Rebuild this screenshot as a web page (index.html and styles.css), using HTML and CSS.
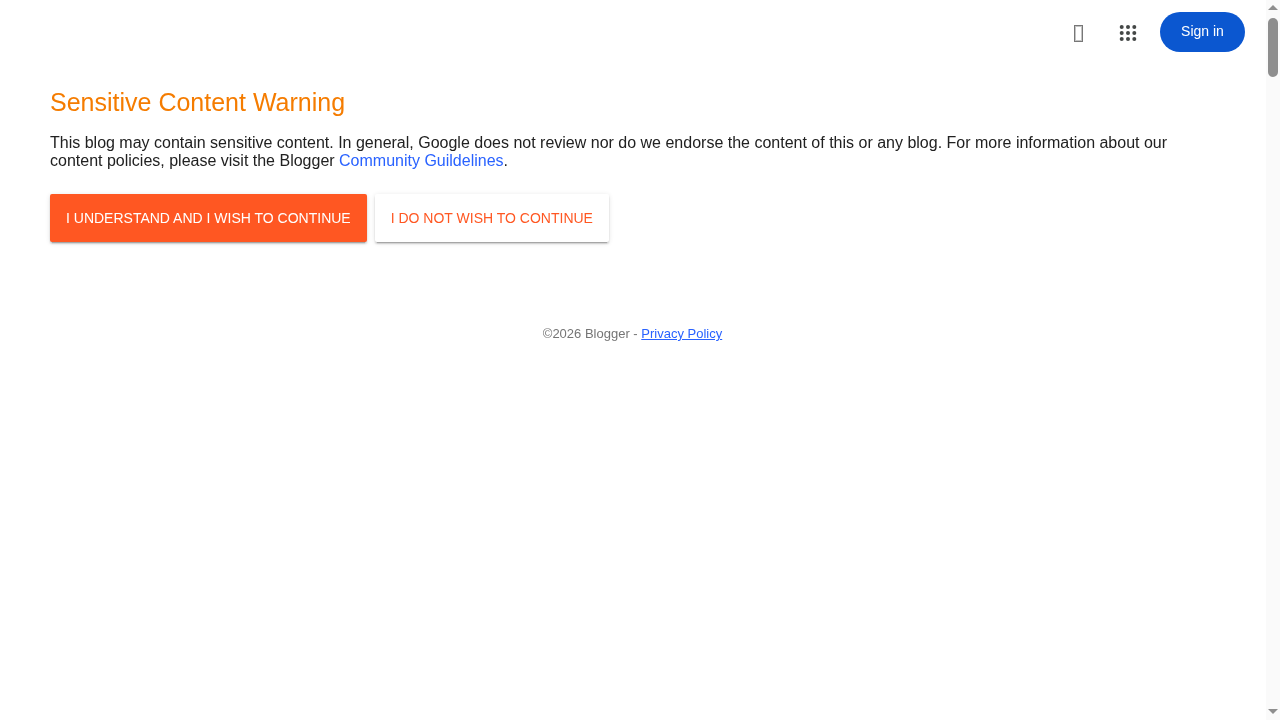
FILE: index.html
```html
<!DOCTYPE html>
<html lang="en">
<head>
  <meta charset="UTF-8">
  <meta name="viewport" content="width=device-width, initial-scale=1.0">
  <title>Blogger: Sensitive Content Warning</title>
  <link rel="stylesheet" href="styles.css">
</head>
<body>
  <div class="page">
    <header class="top-bar">
      <span class="icon-missing"></span>
      <svg class="icon-apps" width="24" height="24" viewBox="0 0 24 24" fill="currentColor">
        <circle cx="5.7" cy="6" r="2"/><circle cx="12" cy="6" r="2"/><circle cx="18.3" cy="6" r="2"/>
        <circle cx="5.7" cy="12" r="2"/><circle cx="12" cy="12" r="2"/><circle cx="18.3" cy="12" r="2"/>
        <circle cx="5.7" cy="18" r="2"/><circle cx="12" cy="18" r="2"/><circle cx="18.3" cy="18" r="2"/>
      </svg>
      <a class="btn-signin" href="#">Sign in</a>
    </header>

    <main class="warning">
      <h1>Sensitive Content Warning</h1>
      <p>This blog may contain sensitive content. In general, Google does not review nor do we endorse the content of this or any blog. For more information about our content policies, please visit the Blogger <a href="#">Community Guildelines</a>.</p>
      <div class="actions">
        <a class="btn btn-primary" href="#">I UNDERSTAND AND I WISH TO CONTINUE</a>
        <a class="btn btn-plain" href="#">I DO NOT WISH TO CONTINUE</a>
      </div>
    </main>

    <footer class="page-footer">&copy;2026 Blogger - <a href="#">Privacy Policy</a></footer>
  </div>

  <div class="scrollbar">
    <span class="arrow-up"></span>
    <span class="thumb"></span>
    <span class="arrow-down"></span>
  </div>
</body>
</html>
```

FILE: styles.css
```css
body {
  font-family: "Liberation Sans", Arial, sans-serif;
  display: flex;
  height: 100vh;
  margin: 0;
  overflow: hidden;
  background-color: #fff;
  color: #212121;
}

a {
  color: #2962ff;
  text-decoration: none;
}

.page {
  flex: 1;
  min-width: 0;
  will-change: opacity;
}

.top-bar {
  display: flex;
  justify-content: flex-end;
  align-items: center;
  height: 40px;
  padding: 12px 21px 0 0;
}

.icon-missing {
  box-sizing: border-box;
  width: 9px;
  height: 17px;
  margin: 3px 33px 0 0;
  border: 1px solid #777;
  box-shadow: inset 0 0 0 1px #c4c4c4;
}

.icon-apps {
  margin: 2px 20px 0 0;
  color: #444746;
}

.btn-signin {
  width: 85px;
  height: 40px;
  border-radius: 20px;
  background-color: #0b57d0;
  color: #fff;
  font-size: 14px;
  line-height: 38px;
  text-align: center;
}

.warning {
  padding: 0 76px 0 50px;
}

.warning h1 {
  margin: 34px 0 0;
  font-size: 25px;
  font-weight: 400;
  line-height: 32px;
  color: #f57c00;
}

.warning p {
  margin: 16px 0 0;
  font-size: 16px;
  line-height: 18px;
}

.actions {
  display: flex;
  gap: 8px;
  margin-top: 24px;
}

.btn {
  padding: 0 16px;
  height: 48px;
  border-radius: 2px;
  font-size: 14px;
  line-height: 48px;
  box-shadow: 0 2px 2px 0 rgba(0, 0, 0, 0.14), 0 3px 1px -2px rgba(0, 0, 0, 0.2), 0 1px 5px 0 rgba(0, 0, 0, 0.12);
}

.btn-primary {
  background-color: #ff5722;
  color: #fff;
}

.btn-plain {
  background-color: #fff;
  color: #ff5722;
}

.page-footer {
  margin-top: 84px;
  padding-right: 1px;
  text-align: center;
  font-size: 13px;
  line-height: 15px;
  color: #757575;
}

.page-footer a {
  text-decoration: underline;
}

.scrollbar {
  display: flex;
  flex-direction: column;
  align-items: center;
  width: 14px;
  height: 100%;
  background-color: #fafafa;
}

.arrow-up,
.arrow-down {
  width: 0;
  height: 0;
  border-left: 5px solid transparent;
  border-right: 5px solid transparent;
}

.arrow-up {
  margin-top: 5px;
  border-bottom: 5px solid #8e8e8e;
}

.arrow-down {
  margin-top: auto;
  margin-bottom: 6px;
  border-top: 5px solid #8e8e8e;
}

.thumb {
  width: 10px;
  height: 59px;
  margin-top: 8px;
  border-radius: 5px;
  background-color: #8e8e8e;
}
```
